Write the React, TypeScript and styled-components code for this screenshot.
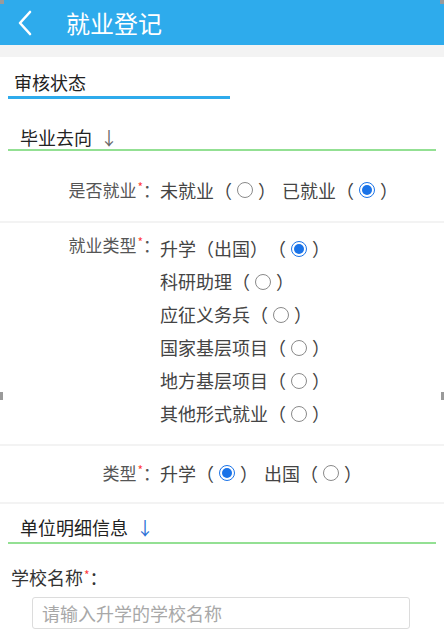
import * as React from "react";
import styled, { createGlobalStyle } from "styled-components";

const GlobalStyle = createGlobalStyle`
  html, body {
    margin: 0;
    padding: 0;
    background: #fff;
  }
  body {
    font-family: "Noto Sans CJK SC", "Noto Sans", sans-serif;
    color: #333;
  }
`;

const Page = styled.div`
  position: relative;
  width: 444px;
  min-height: 638px;
  overflow: hidden;
`;

const Header = styled.div`
  display: flex;
  align-items: center;
  height: 45px;
  background: #2eabec;
  color: #fff;
`;

const BackBtn = styled.div`
  display: flex;
  align-items: center;
  justify-content: center;
  width: 50px;
  height: 45px;
`;

const Title = styled.h1`
  margin: 0 0 0 16px;
  font-size: 24px;
  font-weight: 400;
  line-height: 45px;
`;

const Strip = styled.div`
  height: 12px;
  background: #f3f3f3;
`;

const Tab = styled.div`
  padding: 14px 0 0 14px;
  font-size: 18px;
  line-height: 22px;
  color: #222;
`;

const TabLine = styled.div`
  margin: 3px 0 0 8px;
  width: 222px;
  height: 3px;
  background: #2eabec;
`;

const SectionTitle = styled.div<{ $top: number }>`
  margin-top: ${(p) => p.$top}px;
  padding-left: 20px;
  font-size: 18px;
  line-height: 22px;
  color: #222;
`;

const Arrow = styled.span<{ $blue?: boolean }>`
  margin-left: 8px;
  color: ${(p) => (p.$blue ? "#2a6fd6" : "#666")};
`;

const GreenLine = styled.div<{ $top: number }>`
  margin: ${(p) => p.$top}px 0 0 8px;
  width: 428px;
  height: 2px;
  background: #93e093;
`;

const Row = styled.div<{ $pt: number; $pb: number }>`
  display: flex;
  align-items: flex-start;
  padding: ${(p) => p.$pt}px 0 ${(p) => p.$pb}px;
  border-bottom: 2px solid #f3f3f3;
`;

const Label = styled.div<{ $offset?: number }>`
  width: 160px;
  flex-shrink: 0;
  text-align: right;
  font-size: 17px;
  line-height: 22px;
  color: #555;
  margin-top: ${(p) => p.$offset ?? 0}px;
  white-space: nowrap;
`;

const Star = styled.span`
  position: relative;
  top: -5px;
  color: #ff3b3b;
  font-size: 12px;
  line-height: 0;
  margin-left: 1px;
`;

const Options = styled.div<{ $column?: boolean }>`
  display: flex;
  flex-direction: ${(p) => (p.$column ? "column" : "row")};
  gap: ${(p) => (p.$column ? 0 : 6)}px;
`;

const Option = styled.div<{ $tall?: boolean }>`
  display: flex;
  align-items: center;
  font-size: 18px;
  line-height: ${(p) => (p.$tall ? 33 : 22)}px;
  color: #444;
  white-space: nowrap;
  text-spacing-trim: space-all;
`;

const Radio = styled.span<{ $on?: boolean }>`
  box-sizing: border-box;
  display: inline-flex;
  align-items: center;
  justify-content: center;
  width: 16px;
  height: 16px;
  margin: 0 5px;
  border-radius: 50%;
  border: 1px solid ${(p) => (p.$on ? "#1a73e8" : "#8a8a8a")};

  &::after {
    content: "";
    display: ${(p) => (p.$on ? "block" : "none")};
    width: 10px;
    height: 10px;
    border-radius: 50%;
    background: #1a73e8;
  }
`;

const FieldLabel = styled.div`
  margin-top: 22px;
  padding-left: 11px;
  font-size: 18px;
  line-height: 22px;
  color: #333;
`;

const Input = styled.input`
  box-sizing: border-box;
  display: block;
  margin: 9px 0 0 32px;
  width: 378px;
  height: 32px;
  padding: 0 9px;
  border: 1px solid #dcdcdc;
  border-radius: 3px;
  font-family: inherit;
  font-size: 18px;
  color: #333;
  outline: none;

  &::placeholder {
    color: #a8a8a8;
  }
`;

const Handle = styled.div<{ $x: number; $y: number; $w: number; $h: number }>`
  position: absolute;
  left: ${(p) => p.$x}px;
  top: ${(p) => p.$y}px;
  width: ${(p) => p.$w}px;
  height: ${(p) => p.$h}px;
  background: #9a9a9a;
`;

function Choice({ text, on, tall }: { text: string; on?: boolean; tall?: boolean }) {
  return (
    <Option $tall={tall}>
      {text}（<Radio $on={on} />）
    </Option>
  );
}

function FieldName({ text, offset }: { text: string; offset?: number }) {
  return (
    <Label $offset={offset}>
      {text}
      <Star>*</Star>：
    </Label>
  );
}

const jobTypes = [
  { text: "升学（出国）", on: true },
  { text: "科研助理" },
  { text: "应征义务兵" },
  { text: "国家基层项目" },
  { text: "地方基层项目" },
  { text: "其他形式就业" },
];

export default function App() {
  return (
    <Page>
      <GlobalStyle />
      <Header>
        <BackBtn>
          <svg width="16" height="26" viewBox="0 0 16 26">
            <polyline
              points="13,2 3,13 13,24"
              fill="none"
              stroke="#fff"
              strokeWidth="2.6"
              strokeLinecap="round"
              strokeLinejoin="round"
            />
          </svg>
        </BackBtn>
        <Title>就业登记</Title>
      </Header>
      <Strip />

      <Tab>审核状态</Tab>
      <TabLine />

      <SectionTitle $top={27}>
        毕业去向<Arrow>↓</Arrow>
      </SectionTitle>
      <GreenLine $top={1} />

      <Row $pt={28} $pb={20}>
        <FieldName text="是否就业" />
        <Options>
          <Choice text="未就业" />
          <Choice text="已就业" on />
        </Options>
      </Row>

      <Row $pt={9} $pb={14}>
        <FieldName text="就业类型" offset={2} />
        <Options $column>
          {jobTypes.map((j) => (
            <Choice key={j.text} text={j.text} on={j.on} tall />
          ))}
        </Options>
      </Row>

      <Row $pt={16} $pb={18}>
        <FieldName text="类型" />
        <Options>
          <Choice text="升学" on />
          <Choice text="出国" />
        </Options>
      </Row>

      <SectionTitle $top={12}>
        单位明细信息<Arrow $blue>↓</Arrow>
      </SectionTitle>
      <GreenLine $top={4} />

      <FieldLabel>
        学校名称<Star>*</Star>：
      </FieldLabel>
      <Input placeholder="请输入升学的学校名称" />

      <Handle $x={0} $y={0} $w={4} $h={4} />
      <Handle $x={440} $y={0} $w={4} $h={4} />
      <Handle $x={0} $y={392} $w={3} $h={8} />
      <Handle $x={441} $y={392} $w={3} $h={8} />
    </Page>
  );
}
